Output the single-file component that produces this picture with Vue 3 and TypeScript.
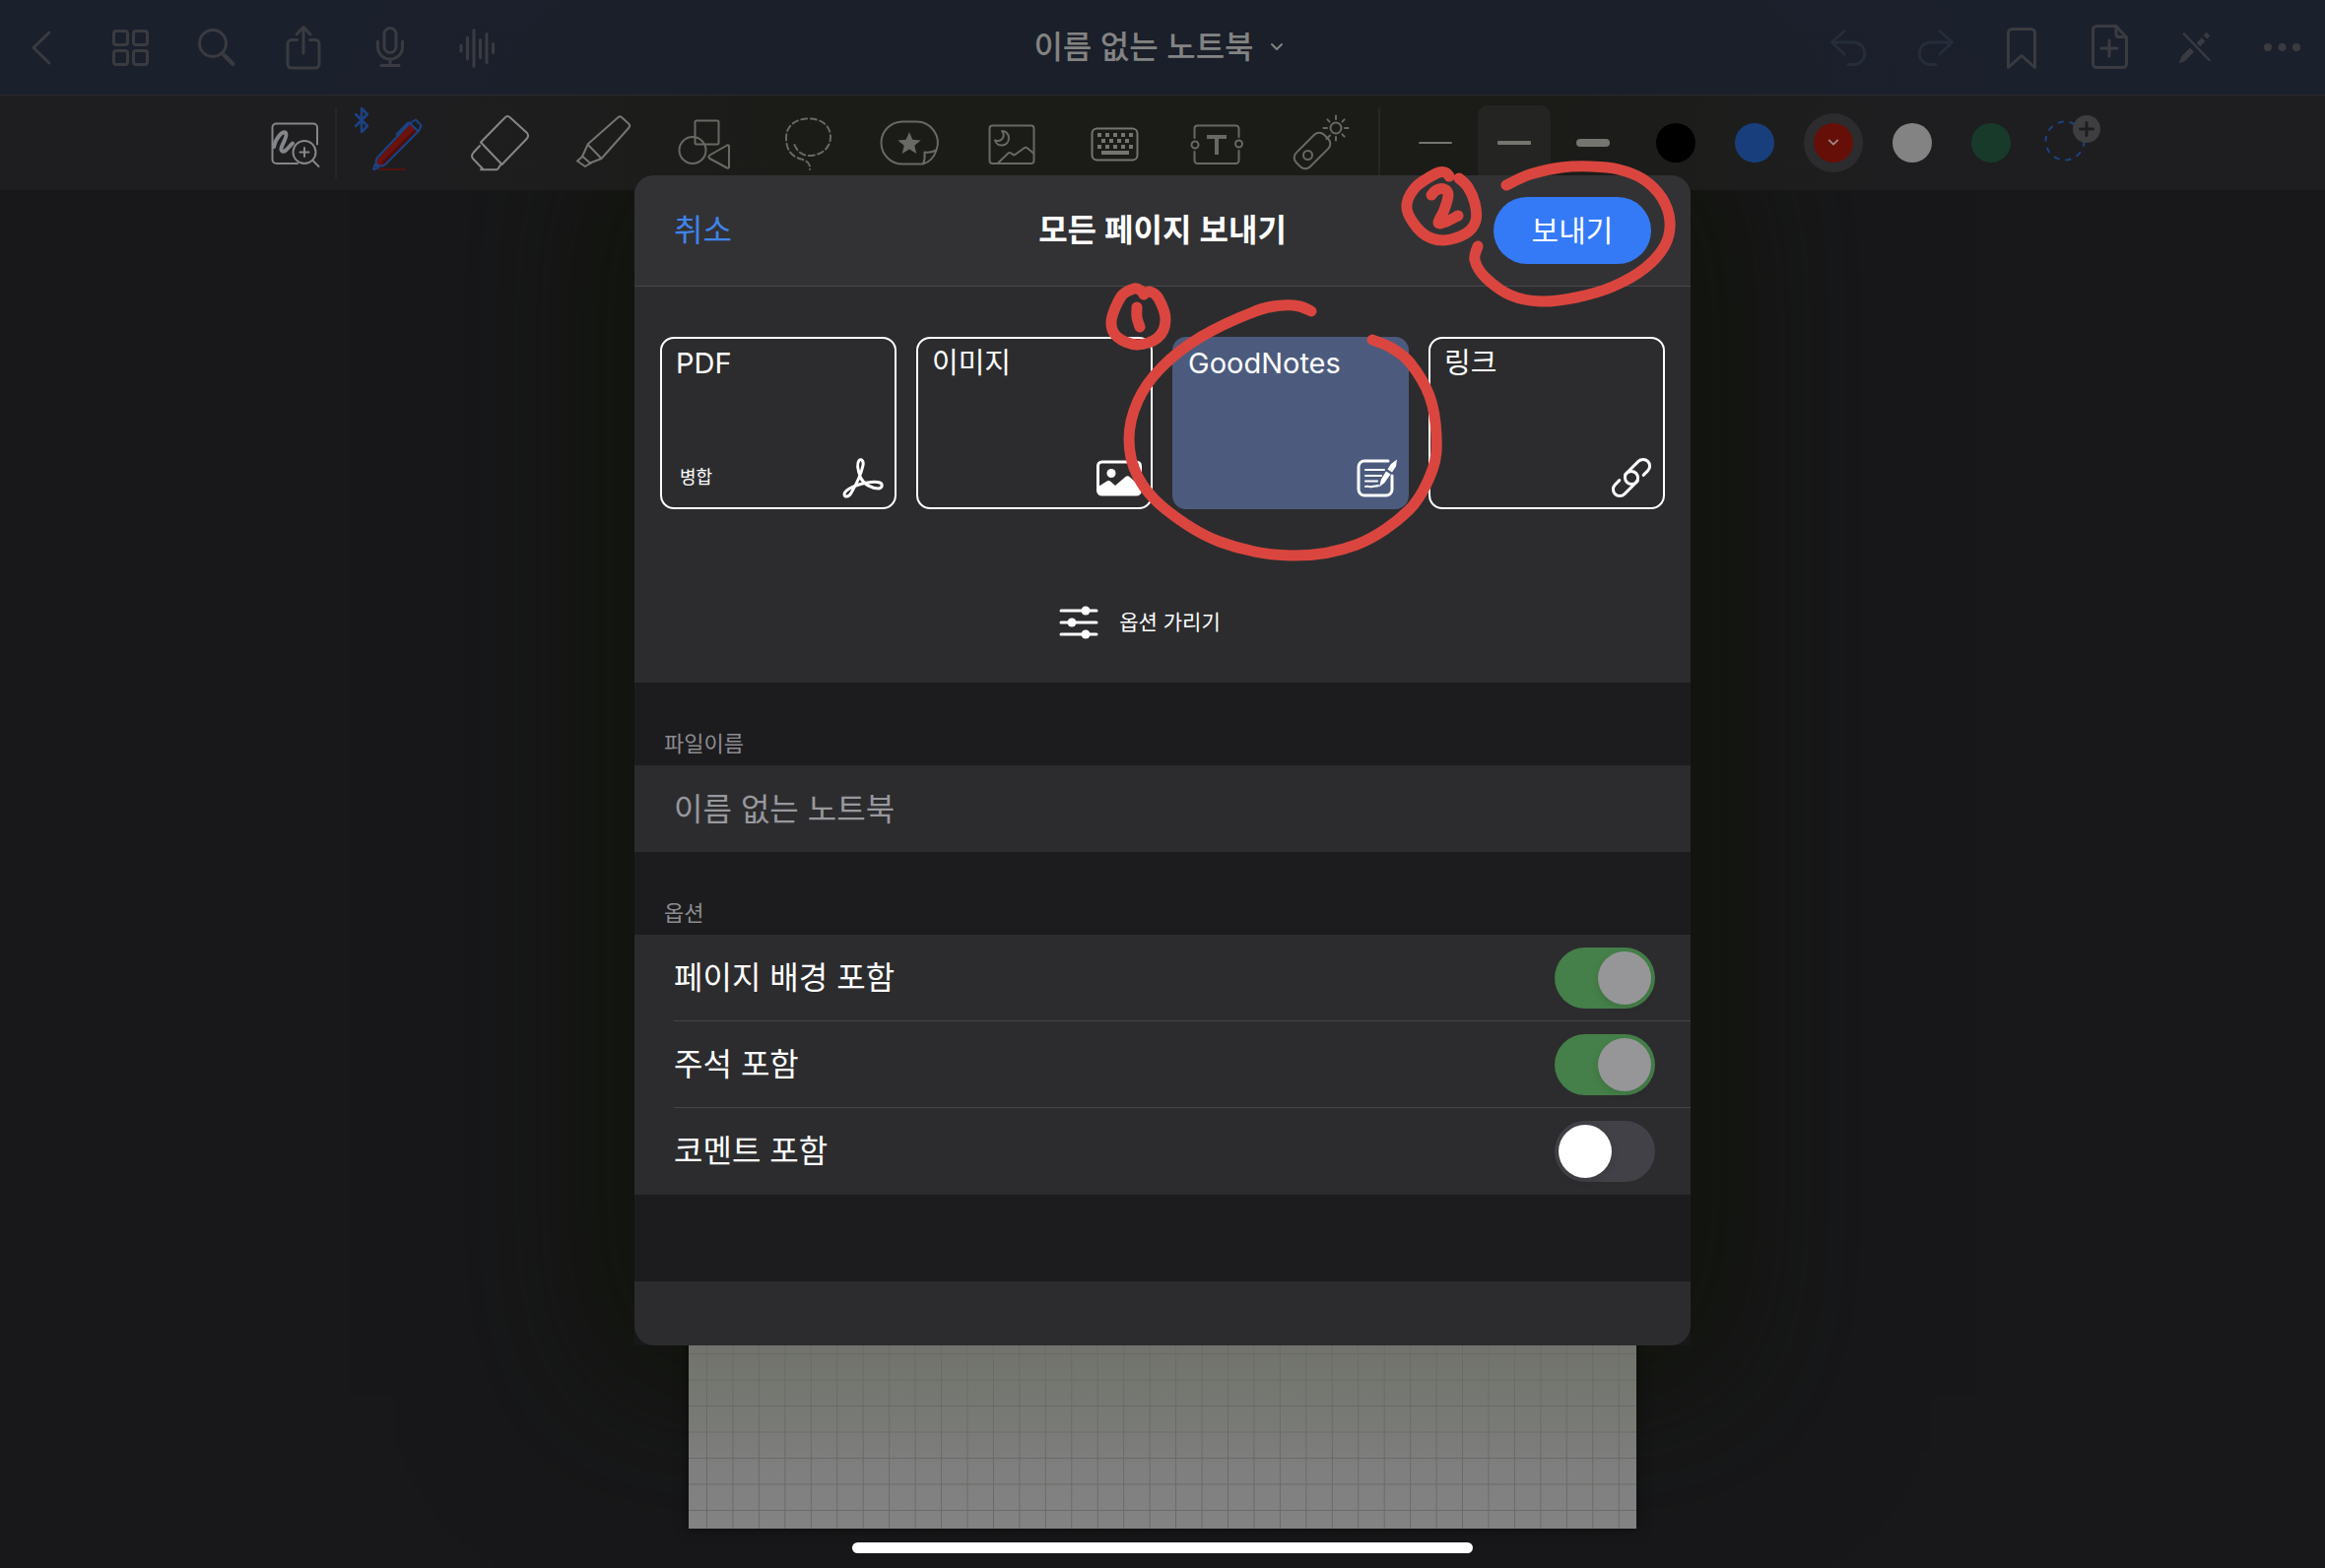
<script setup lang="ts">
import { ref } from 'vue'

interface Icon { name: string; label: string; art: string }
type Point = [number, number]

const leftNav: Icon[] = [
  { name: 'back', label: '뒤로', art: '<path d="M30 9 14 24.500 30 40"/>' },
  { name: 'grid', label: '썸네일', art: '<rect x="7.500" y="7.500" width="14" height="14" rx="2.500"/><rect x="27.500" y="7.500" width="14" height="14" rx="2.500"/><rect x="7.500" y="27.500" width="14" height="14" rx="2.500"/><rect x="27.500" y="27.500" width="14" height="14" rx="2.500"/>' },
  { name: 'search', label: '검색', art: '<circle cx="20" cy="20" r="13.500"/><path d="M30.500 31 40.500 41" stroke-width="4"/>' },
  { name: 'share', label: '공유', art: '<path d="M17.500 16.500H12a4 4 0 0 0-4 4V41a4 4 0 0 0 4 4h24a4 4 0 0 0 4-4V20.500a4 4 0 0 0-4-4h-5.500M24 30V4M17 11l7-7.500 7 7.500"/>' },
  { name: 'mic', label: '녹음', art: '<rect x="18" y="4.500" width="12" height="25" rx="6"/><path d="M11.500 18v6a12.500 12 0 0 0 25 0v-6M24 36v6M15 42.500h18"/>' },
  { name: 'wave', label: '오디오', art: '<path d="M8 22v6M14.500 14v22M21 6.500v37M27.500 16.500v18M34 10.500v29M40.500 20.500v9"/>' }
]

const rightNav: Icon[] = [
  { name: 'undo', label: '실행 취소', art: '<path d="M20 7.500 7.500 19 20 31M8 19h21.500a11.200 11.200 0 0 1 0 22.500H24"/>' },
  { name: 'redo', label: '다시 실행', art: '<path d="M29 7.500 41.500 19 29 31M41 19H19.500a11.200 11.200 0 0 0 0 22.500H25"/>' },
  { name: 'bookmark', label: '책갈피', art: '<path d="M10.500 44.500V9.500a4 4 0 0 1 4-4h19a4 4 0 0 1 4 4v35L24 32.500z"/>' },
  { name: 'add-page', label: '페이지 추가', art: '<path d="M12.500 2.500H32l10.500 11.500v26.500a4 4 0 0 1-4 4h-26a4 4 0 0 1-4-4v-34a4 4 0 0 1 4-4zM32 3v8a2.500 2.500 0 0 0 2.500 2.500h8M25 17v16M17 25h16"/>' },
  { name: 'pen-off', label: '읽기 모드', art: '<path d="M13 10.500 38.500 37" stroke-width="2.500"/><path d="M8.500 39.500 11 33 19 25 22.500 28.500 14.500 37z" fill="currentColor" stroke-width="1"/><path d="M27.500 21.500 32.500 16" stroke-width="5" stroke-linecap="butt"/><path d="M34.500 13.700 37.500 10.500" stroke-width="5" stroke-linecap="butt"/>' },
  { name: 'more', label: '더 보기', art: '<g fill="currentColor" stroke="none"><circle cx="10" cy="24" r="4"/><circle cx="24.500" cy="24" r="4"/><circle cx="39" cy="24" r="4"/></g>' }
]

const zoomArt = '<path d="M54 33.500V16.500a4 4 0 0 0-4-4H12.500a4 4 0 0 0-4 4V49a4 4 0 0 0 4 4H34"/><path d="M10 36C12 27 19 19 22 22C25 26 15 37 18 40C21 43 25 36 29 32.500" stroke-width="4"/><circle cx="41" cy="41.500" r="11.500"/><path d="M49.500 50 55.500 56M41 37v9M36.500 41.500h9"/>'

const tools: Icon[] = [
  { name: 'pen', label: '펜', art: '<path d="M-10 3 2 15-4 21V-3L2 3-10 15" stroke="#1c4283" stroke-width="2.500"/><path d="M12 49 46 12 53 19 19 54C14 57 9 54 12 49z" fill="#6c120d" stroke="none"/><path d="M19 54 53 19 51 17 16 52z" fill="#4a100e" stroke="none"/><path d="M12 47 45 12 51 8.500 56.500 14.500 54 20 20 54C14 58 8 54 12 47zM45 12 53.500 20.500M31.500 23.500 43 11.500 46 12" stroke="#1c4283"/><path d="M8 59l1.500-5 3.500 3.500z" stroke="#1c4283"/><path d="M14 59h26" stroke="#54130f"/>' },
  { name: 'eraser', label: '지우개', art: '<path d="M37 7 13 31.500 34.500 54 60 27.500C61.500 25.500 61.500 24 60 22L43 6.500C41 4.500 39 4.500 37 7zM12 35 5.500 42C3.500 44.500 3.500 46.500 5.500 48.500L15.500 59M30 59 33 54.500M13 59.200h16"/>' },
  { name: 'highlighter', label: '형광펜', art: '<path d="M48 6.500 17.500 33.500 31.500 48 59.500 16.500C60.500 15 60.500 14 59.500 13L52 6C50.500 5 49.500 5 48 6.500zM17.500 34 12 46M31.500 48 20 52.500M12 45.500 20.500 53M11.500 46.500 7 50.500 15 56 20 53"/>' },
  { name: 'shapes', label: '도형', art: '<rect x="22.500" y="9.500" width="24" height="24" rx="1.500"/><circle cx="20" cy="39.500" r="13.500"/><path d="M37.500 44.500 55 34.500C56 34 57 34.500 57 35.500V56.500C57 57.500 56 58 55 57.500L37.500 48C36 47 36 45.500 37.500 44.500z"/>' },
  { name: 'lasso', label: '올가미', art: '<path stroke-dasharray="6 3.500" d="M19.500 34C22 41 28 45 34 45C47 45 56 37 56 26C56 14 46 7.500 34 7.500C20 7.500 11 15 11 27C11 41 18 46 26 48.500C32 50 36 53 35 59"/>' },
  { name: 'sticker', label: '요소', art: '<path d="M46 53.500H25A21.500 21.500 0 0 1 25 10.500H39A21.500 21.500 0 0 1 59.500 39.500C57 47 53 51.500 46 53.500C47.500 50 48 46 47.500 41.500C52 42 56.500 41.500 59.500 39"/><path d="M32 21l3.300 7.700 8.400.7-6.400 5.400 2 8.200-7.300-4.400-7.300 4.400 2-8.200-6.400-5.400 8.400-.7z" fill="currentColor" stroke="none"/>' },
  { name: 'image', label: '이미지', art: '<rect x="9.500" y="14.500" width="45" height="38.500" rx="3"/><path d="M22 20C26 25 22 32 15 29.500C17 37 29 36 29 27C29 23 26 20 22 20zM17.500 53 28.500 42.500C30 41.500 31 42 32.500 43.500L34.500 44.500 45 37C46 36.500 47 36.500 48 37.500L54 42.500"/>' },
  { name: 'keyboard', label: '키보드', art: '<rect x="9.500" y="17.500" width="46" height="32" rx="5"/><path stroke-width="4" stroke-linecap="butt" d="M15 24h4m4 0h4m4 0h4m4 0h4m4 0h4M19 30h4m4 0h4m4 0h4m4 0h4M15 36h4m4 0h4m4 0h4m4 0h4m4 0h4M19 42h28"/>' },
  { name: 'text', label: '텍스트', art: '<path d="M9.500 27V17.500a3 3 0 0 1 3-3h39a3 3 0 0 1 3 3V26M9.500 41v9a3 3 0 0 0 3 3h39a3 3 0 0 0 3-3V40"/><circle cx="10" cy="34" r="3.500"/><circle cx="54.500" cy="33" r="3.500"/><path d="M22 26h20M32 26v18" stroke-width="4" stroke-linecap="butt"/>' },
  { name: 'laser', label: '레이저', art: '<rect x="5" y="30" width="40" height="20" rx="7" transform="rotate(-45 25 40)"/><circle cx="20.500" cy="44.500" r="4.500"/><path d="M39.500 28 43 24.500M49 8V4.500M49 26v3.500M40 17h-3.500M58 17h3.500M42.600 10.600 40.400 8.400M55.400 10.600 57.600 8.400M55.400 23.400 57.600 25.600"/><circle cx="49" cy="17" r="5.500"/>' }
]

const strokes = [
  { name: 'thin', active: false },
  { name: 'medium', active: true },
  { name: 'thick', active: false }
]

const swatches = [
  { name: 'black', active: false },
  { name: 'blue', active: false },
  { name: 'red', active: true },
  { name: 'white', active: false },
  { name: 'green', active: false }
]

const formats = [
  { title: 'PDF', note: '병합', art: '<path d="M19.500 22C17 15 15 8 18 4.500C20 2.500 23 5 22 9.500C20.500 17 15 29 10 37.500C7.500 42 3.500 42 3 39C3 35 11 31 18 29C25 27 34 25.500 39 27C42 28 42 32.500 38 33C31 33 23 29 19.500 22z"/>' },
  { title: '이미지', note: '', art: '<rect x=".5" y="6" width="43" height="33" rx="4"/><circle cx="14" cy="17.500" r="4.500" fill="currentColor" stroke="none"/><path d="M1 31 9.500 25.500C10.500 24.700 12 24.700 13 25.500L18 30 28.500 21C30 19.800 31.500 20 33 21.500L42 29.500V38H1z" fill="currentColor" stroke="none"/>' },
  { title: 'GoodNotes', note: '', art: '<g transform="translate(3 0)"><path d="M32 5H8a6 6 0 0 0-6 6V34a6 6 0 0 0 6 6H30a6 6 0 0 0 6-6V20"/><path d="M9 14h19M9 20h16M9 25.500h12M9 31c3-1 4 1 7 0s4 0 6-1" stroke-width="2"/><path d="M23 31.500 25 23.500 30 15.500 34.500 18.500 28.500 27zM31.500 13.500 35 8 41 3.500 40 10.500 36 16.500z" fill="currentColor" stroke="none"/></g>' },
  { title: '링크', note: '', art: '<g transform="translate(22 22) rotate(-45)"><path d="M10.500 6.750H16.750A6.750 6.750 0 0 0 16.750-6.750H.25A6.750 6.750 0 0 0 .25 6.750H2"/><path d="M-10.500-6.750H-16.750A6.750 6.750 0 0 0-16.750 6.750H-.25A6.750 6.750 0 0 0-.25-6.750H-2"/></g>' }
]

const selected = ref('GoodNotes')
const fileName = ref('')
const options = ref([
  { id: 'background', label: '페이지 배경 포함', on: true, locked: true },
  { id: 'annotation', label: '주석 포함', on: true, locked: true },
  { id: 'comment', label: '코멘트 포함', on: false, locked: false }
])

// Freehand pen marks: points are joined by a Catmull-Rom spline.
const marks: Point[][] = [
  [[1161, 299], [1158, 295], [1151, 293], [1138, 301], [1128, 326], [1134, 342], [1154, 350], [1175, 343], [1183, 325], [1176, 303], [1167, 296], [1161, 299]],
  [[1154, 312], [1154, 322], [1157, 332]],
  [[1331, 316], [1319, 311], [1302, 310], [1274, 316], [1219, 342], [1179, 373], [1155, 407], [1146, 446], [1155, 484], [1183, 517], [1238, 550], [1310, 564], [1377, 553], [1430, 518], [1454, 477], [1458, 442], [1451, 402], [1431, 368], [1412, 353], [1393, 345]],
  [[1481, 181], [1490, 190], [1497, 206], [1498, 224], [1488, 237], [1465, 244], [1443, 236], [1428, 212], [1436, 191], [1458, 176], [1467, 175], [1471, 179]],
  [[1453, 198], [1458, 193], [1466, 192], [1470, 198], [1466, 213], [1460, 226], [1468, 225], [1480, 219]],
  [[1529, 188], [1553, 177], [1585, 170], [1615, 169], [1643, 172], [1668, 182], [1687, 201], [1695, 225], [1690, 249], [1670, 272], [1637, 291], [1600, 302], [1564, 306], [1534, 300], [1508, 282], [1497, 264], [1500, 250]]
]

function spline(points: Point[]): string {
  let d = `M${points[0][0]} ${points[0][1]}`
  for (let i = 0; i < points.length - 1; i++) {
    const a = points[Math.max(i - 1, 0)]
    const b = points[i]
    const c = points[i + 1]
    const e = points[Math.min(i + 2, points.length - 1)]
    d += `C${b[0] + (c[0] - a[0]) / 6} ${b[1] + (c[1] - a[1]) / 6} ${c[0] - (e[0] - b[0]) / 6} ${c[1] - (e[1] - b[1]) / 6} ${c[0]} ${c[1]}`
  }
  return d
}
</script>

<template>
  <div class="app">
    <div class="glow" aria-hidden="true"></div>

    <header class="nav">
      <div class="nav-group">
        <button v-for="i in leftNav" :key="i.name" type="button" class="nav-button" :aria-label="i.label">
          <svg class="nav-icon" viewBox="0 0 48 48" v-html="i.art"></svg>
        </button>
      </div>
      <button type="button" class="doc-title">
        이름 없는 노트북
        <svg class="doc-chevron" viewBox="0 0 14 10"><path d="M2 2l5 5 5-5" /></svg>
      </button>
      <div class="nav-group">
        <button v-for="i in rightNav" :key="i.name" type="button" class="nav-button" :class="i.name" :aria-label="i.label">
          <svg class="nav-icon" viewBox="0 0 48 48" v-html="i.art"></svg>
        </button>
      </div>
    </header>

    <div class="toolbar">
      <button type="button" class="zoom-tool" aria-label="확대 창">
        <svg class="tool-icon" viewBox="0 0 64 64" v-html="zoomArt"></svg>
      </button>
      <span class="divider"></span>
      <div class="tools">
        <button v-for="t in tools" :key="t.name" type="button" class="tool" :class="t.name" :aria-label="t.label">
          <svg class="tool-icon" viewBox="0 0 64 64" v-html="t.art"></svg>
        </button>
      </div>
      <span class="divider"></span>
      <div class="strokes">
        <button v-for="s in strokes" :key="s.name" type="button" class="stroke" :class="[s.name, { active: s.active }]" :aria-label="s.name">
          <span class="stroke-line"></span>
        </button>
      </div>
      <div class="swatches">
        <button v-for="s in swatches" :key="s.name" type="button" class="swatch" :class="{ active: s.active }" :aria-label="s.name">
          <span class="dot" :class="s.name">
            <svg v-if="s.active" class="dot-chevron" viewBox="0 0 14 10"><path d="M2 2l5 5 5-5" /></svg>
          </span>
        </button>
        <button type="button" class="add-color" aria-label="색상 추가">
          <svg class="add-icon" viewBox="0 0 60 60">
            <circle cx="25" cy="28" r="19.500" class="add-ring" />
            <circle cx="47" cy="16" r="14" class="add-badge" />
            <path d="M47 9.500v13M40.500 16h13" class="add-plus" />
          </svg>
        </button>
      </div>
    </div>

    <main class="workspace">
      <svg class="paper" aria-hidden="true">
        <defs>
          <pattern id="squares" x="18" y="8" width="26.450" height="26.500" patternUnits="userSpaceOnUse">
            <path d="M.5 0V26.500M0 .5H26.450" class="rule" />
          </pattern>
        </defs>
        <rect class="squares" width="100%" height="100%" fill="url(#squares)" />
      </svg>
      <div class="home"><span class="home-bar"></span></div>
    </main>

    <form class="dialog" role="dialog" aria-labelledby="dialog-title" @submit.prevent>
      <div class="dialog-head">
        <div class="side"><button type="button" class="cancel">취소</button></div>
        <h1 id="dialog-title" class="dialog-title">모든 페이지 보내기</h1>
        <div class="side end"><button type="submit" class="send">보내기</button></div>
      </div>

      <div class="formats">
        <button
          v-for="f in formats" :key="f.title" type="button" class="format"
          :class="{ selected: f.title === selected }" @click="selected = f.title"
        >
          <span class="format-title">{{ f.title }}</span>
          <span class="format-foot">
            <span class="format-note">{{ f.note }}</span>
            <svg class="format-icon" viewBox="0 0 44 44" v-html="f.art"></svg>
          </span>
        </button>
      </div>

      <div class="option-toggle">
        <button type="button" class="hide-options">
          <svg class="sliders" viewBox="0 0 40 36">
            <path d="M2 6h36M2 18h36M2 30h36" />
            <circle cx="27" cy="6" r="4.500" /><circle cx="13" cy="18" r="4.500" /><circle cx="27" cy="30" r="4.500" />
          </svg>
          옵션 가리기
        </button>
      </div>

      <label class="section-label" for="file-name">파일이름</label>
      <input id="file-name" v-model="fileName" class="file-name" type="text" placeholder="이름 없는 노트북">

      <h2 class="section-label">옵션</h2>
      <div class="rows">
        <div v-for="o in options" :key="o.id" class="row">
          <label class="row-label" :for="o.id">{{ o.label }}</label>
          <input :id="o.id" v-model="o.on" class="switch" type="checkbox" role="switch" :disabled="o.locked">
        </div>
      </div>
      <div class="gap"></div>
      <div class="last-row"></div>

      <svg class="marks" viewBox="644 178 1072 1188" aria-hidden="true">
        <path v-for="(m, i) in marks" :key="i" :d="spline(m)" />
      </svg>
    </form>
  </div>
</template>

<style>
body {
  margin: 0;
  background: #18181a;
}
</style>

<style scoped>
.app {
  position: relative;
  display: flex;
  flex-direction: column;
  min-height: 100vh;
  overflow: hidden;
  background: #18181a;
  color: #fff;
  font-family: Inter, "Noto Sans CJK KR", sans-serif;
}
button {
  margin: 0;
  padding: 0;
  border: 0;
  background: none;
  color: inherit;
  font: inherit;
}
svg {
  display: block;
  overflow: visible;
  fill: none;
  stroke: currentColor;
  stroke-linecap: round;
  stroke-linejoin: round;
}
.glow {
  position: absolute;
  top: 178px;
  left: 0;
  right: 0;
  width: 1072px;
  height: 1188px;
  margin: 0 auto;
  box-shadow: 0 0 160px 50px rgba(12, 16, 2, 0.6);
}

.nav {
  position: relative;
  display: flex;
  align-items: center;
  height: 96px;
  border-bottom: 1px solid #2b2b2e;
  background: radial-gradient(ellipse 900px 300px at 50% 100%, #1a1f29 50%, #1b202d 100%);
}
.nav-group {
  flex: 1;
  display: flex;
}
.nav-group:last-child {
  justify-content: flex-end;
}
.nav-button {
  display: flex;
  justify-content: center;
  width: 88px;
  color: #3a3b40;
}
.nav-button.undo,
.nav-button.redo {
  color: #262d3a;
}
.nav-icon {
  width: 48px;
  height: 48px;
  stroke-width: 3;
}
.doc-title {
  display: flex;
  align-items: center;
  gap: 16px;
  padding-right: 8px;
  color: #838383;
  font-size: 32px;
  font-weight: 500;
  line-height: 48px;
}
.doc-chevron {
  width: 14px;
  height: 10px;
  stroke-width: 2;
}

.toolbar {
  position: relative;
  display: flex;
  align-items: center;
  box-sizing: border-box;
  height: 96px;
  padding-left: 260px;
  background: linear-gradient(90deg, #1e1e20 18%, #1b1c18 34%, #1b1c18 66%, #1e1e20 82%);
  color: #85868a;
}
.divider {
  width: 2px;
  height: 72px;
  background: #262627;
}
.zoom-tool {
  display: flex;
  justify-content: center;
  width: 80px;
}
.tool-icon {
  width: 64px;
  height: 64px;
  stroke-width: 2;
}
.tools {
  display: flex;
  padding: 0 8px 0 9px;
}
.tool {
  display: flex;
  justify-content: center;
  width: 104px;
  color: #686963;
}
.tool.eraser {
  color: #858686;
}
.tool.highlighter,
.tool.keyboard {
  color: #74756f;
}
.strokes {
  display: flex;
  align-self: stretch;
  gap: 6px;
  padding: 10px 7px 0 19px;
}
.stroke {
  display: flex;
  justify-content: center;
  align-items: center;
  width: 74px;
  height: 76px;
  border-radius: 10px;
}
.stroke.active {
  background: #242522;
}
.stroke-line {
  width: 34px;
  height: 2px;
  border-radius: 1px;
  background: #74756f;
}
.medium .stroke-line {
  height: 4px;
}
.thick .stroke-line {
  height: 8px;
  border-radius: 4px;
}
.swatches {
  display: flex;
  align-items: center;
  gap: 20px;
  padding-left: 10px;
}
.swatch {
  display: flex;
  justify-content: center;
  align-items: center;
  width: 60px;
  height: 60px;
  border-radius: 30px;
}
.swatch.active {
  background: #2c2c2e;
}
.dot {
  display: flex;
  justify-content: center;
  align-items: center;
  width: 40px;
  height: 40px;
  border-radius: 20px;
}
.black { background: #000; }
.blue { background: #183f7c; }
.red { background: #650f08; }
.white { background: #838383; }
.green { background: #183a2b; }
.dot-chevron {
  width: 12px;
  height: 10px;
  color: #a08a88;
  stroke-width: 2;
}
.add-icon {
  width: 60px;
  height: 60px;
}
.add-ring {
  stroke: #1c4283;
  stroke-width: 2;
  stroke-dasharray: 6 6;
  stroke-linecap: butt;
}
.add-badge {
  fill: #3e3e40;
  stroke: none;
}
.add-plus {
  stroke: #1e1e20;
  stroke-width: 3;
}

.workspace {
  position: relative;
  flex: 1;
  display: flex;
  flex-direction: column;
  align-items: center;
  padding-top: 60px;
}
.paper {
  flex: 1;
  width: 962px;
  max-width: 100%;
  background: linear-gradient(0deg, #838383 0, #7f7f7f 60px, #777974 120px, #71736c 180px);
  box-shadow: 0 0 12px rgba(0, 0, 0, 0.5);
}
.squares {
  stroke: none;
}
.rule {
  stroke: #6a6b67;
  stroke-width: 1;
}
.home {
  box-sizing: border-box;
  height: 40px;
  padding-top: 14px;
}
.home-bar {
  display: block;
  width: 630px;
  height: 11px;
  border-radius: 6px;
  background: #fff;
}

.dialog {
  position: absolute;
  top: 178px;
  left: 0;
  right: 0;
  width: 1072px;
  max-width: 100%;
  margin: 0 auto;
  border-radius: 20px;
  background: #2c2c2e;
}
.dialog-head {
  display: flex;
  align-items: center;
  box-sizing: border-box;
  height: 113px;
  padding: 0 40px;
  border-bottom: 1px solid #48484a;
  border-radius: 20px 20px 0 0;
  background: #323234;
}
.side {
  flex: 1;
  display: flex;
}
.side.end {
  justify-content: flex-end;
}
.cancel {
  color: #4083ea;
  font-size: 32px;
  line-height: 48px;
}
.dialog-title {
  margin: 0;
  font-size: 32px;
  font-weight: 600;
  line-height: 48px;
}
.send {
  width: 160px;
  height: 68px;
  border-radius: 34px;
  background: #347af7;
  font-size: 30px;
  line-height: 48px;
}
.formats {
  display: flex;
  gap: 20px;
  padding: 51px 26px 0;
}
.format {
  flex: 1;
  display: flex;
  flex-direction: column;
  justify-content: space-between;
  box-sizing: border-box;
  height: 175px;
  padding: 4px 10px 8px 14px;
  border: 2px solid #fff;
  border-radius: 14px;
  text-align: left;
}
.format.selected {
  border-color: #4c5b7d;
  background: #4c5b7d;
}
.format-title {
  font-size: 29px;
  line-height: 42px;
}
.format-foot {
  display: flex;
  justify-content: space-between;
  align-items: center;
  padding-left: 4px;
}
.format-note {
  font-size: 18px;
  line-height: 28px;
}
.format-icon {
  width: 44px;
  height: 44px;
  stroke-width: 3;
}
.option-toggle {
  display: flex;
  justify-content: center;
  align-items: center;
  box-sizing: border-box;
  height: 176px;
  padding: 54px 46px 0 0;
}
.hide-options {
  display: flex;
  align-items: center;
  gap: 21px;
  font-size: 21px;
  line-height: 32px;
}
.sliders {
  width: 40px;
  height: 36px;
  stroke-width: 3;
}
.sliders circle {
  fill: #fff;
  stroke: none;
}
.section-label {
  display: block;
  box-sizing: border-box;
  height: 84px;
  margin: 0;
  padding: 46px 30px 6px;
  background: #1c1c1e;
  color: #8c8c91;
  font-size: 22px;
  font-weight: 400;
  line-height: 32px;
}
.file-name {
  display: block;
  box-sizing: border-box;
  width: 100%;
  height: 88px;
  padding: 0 40px;
  border: 0;
  background: #2c2c2e;
  color: #fff;
  font: inherit;
  font-size: 32px;
}
.file-name::placeholder {
  color: #98989e;
  opacity: 1;
}
.row {
  display: flex;
  justify-content: space-between;
  align-items: center;
  box-sizing: border-box;
  height: 88px;
  margin-left: 40px;
  padding-right: 36px;
  border-bottom: 1px solid #454548;
}
.row:last-child {
  border-bottom-color: transparent;
}
.row-label {
  font-size: 32px;
  line-height: 48px;
}
.switch {
  appearance: none;
  box-sizing: border-box;
  width: 102px;
  height: 62px;
  margin: 0;
  padding: 4px;
  border-radius: 31px;
  background: #424147;
}
.switch::before {
  content: "";
  display: block;
  width: 54px;
  height: 54px;
  border-radius: 27px;
  background: #fff;
  box-shadow: 0 3px 8px rgba(0, 0, 0, 0.1);
}
.switch:checked {
  background: #457f49;
}
.switch:checked::before {
  margin-left: auto;
  background: #969698;
}
.gap {
  height: 88px;
  background: #1c1c1e;
}
.last-row {
  height: 65px;
}
.marks {
  position: absolute;
  top: 0;
  left: 0;
  width: 100%;
  height: 100%;
  stroke: #da463f;
  stroke-width: 11;
  pointer-events: none;
}
</style>
